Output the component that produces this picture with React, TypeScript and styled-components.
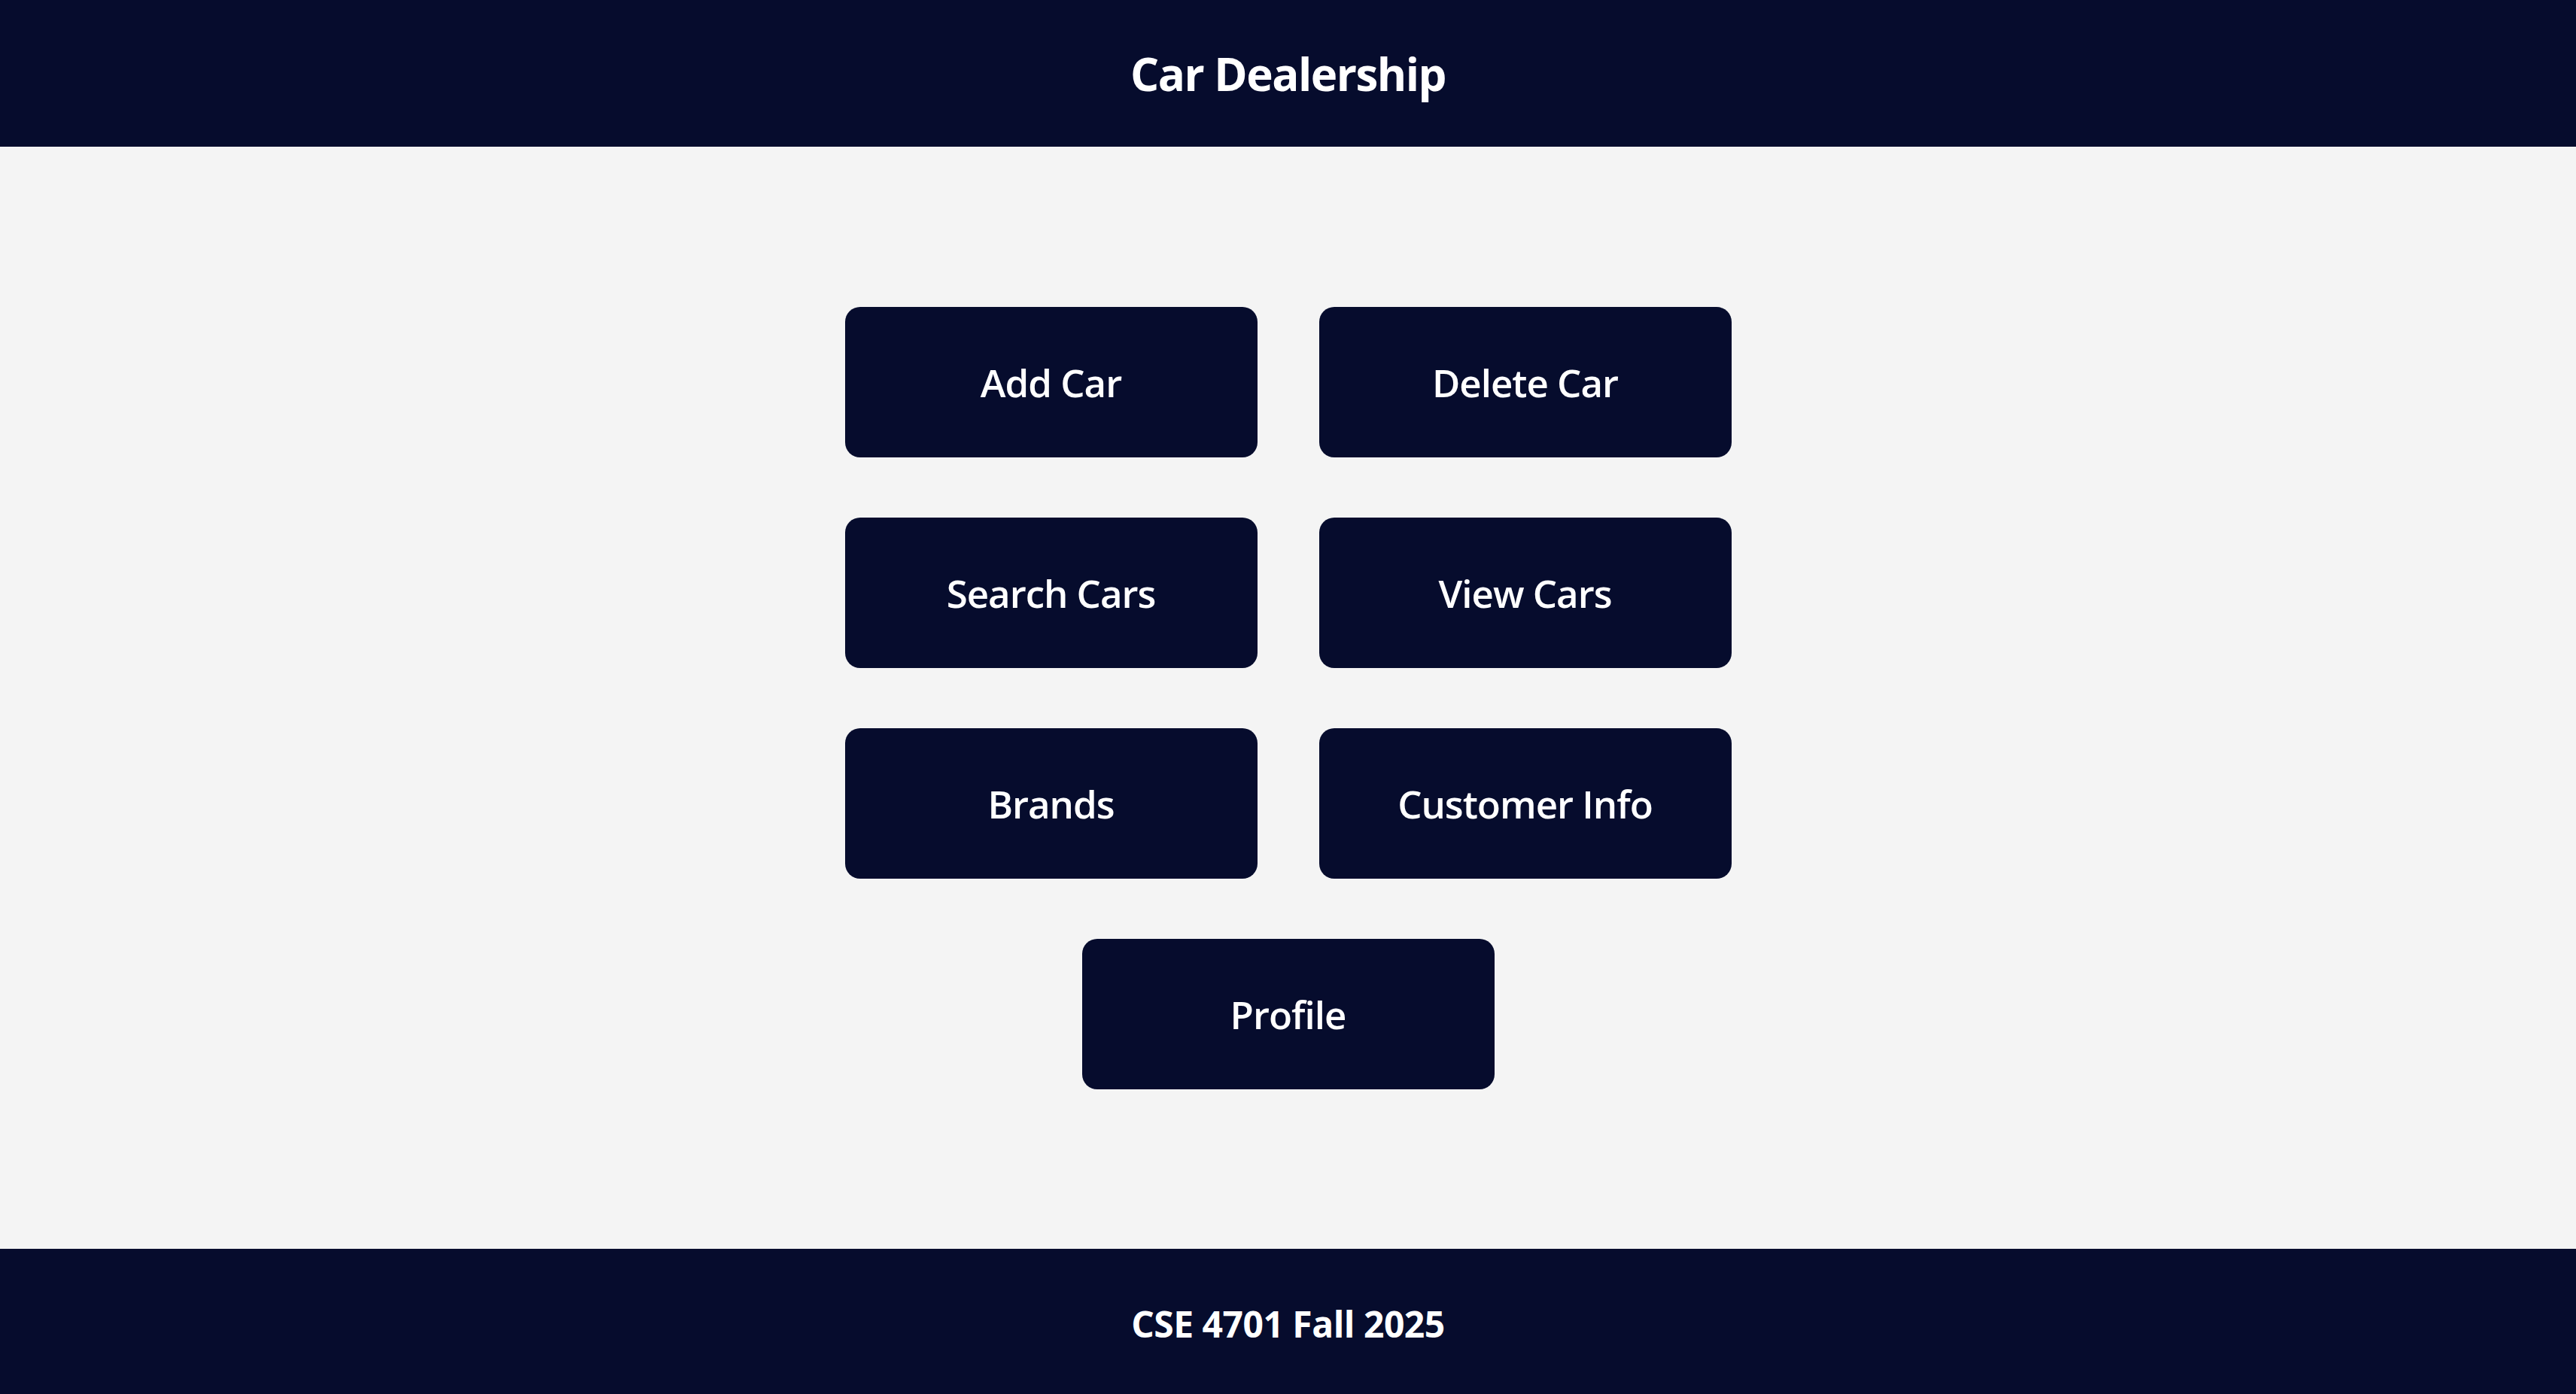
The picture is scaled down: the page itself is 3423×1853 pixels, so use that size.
import React from "react";
import styled, { createGlobalStyle } from "styled-components";

const GlobalStyle = createGlobalStyle`
  html, body {
    margin: 0;
    padding: 0;
    background: #f4f4f4;
    font-family: "Open Sans", "Noto Sans", sans-serif;
  }
`;

const Page = styled.div`
  display: flex;
  flex-direction: column;
  min-height: 100vh;
`;

const Header = styled.header`
  height: 195px;
  background: #060c2d;
  color: #ffffff;
  display: flex;
  align-items: center;
  justify-content: center;
`;

const Title = styled.h1`
  margin: 0;
  font-size: 60px;
  font-weight: 700;
  letter-spacing: -1.5px;
`;

const Main = styled.main`
  flex: 1;
  display: flex;
  align-items: center;
  justify-content: center;
`;

const Grid = styled.div`
  display: grid;
  grid-template-columns: 548px 548px;
  column-gap: 82px;
  row-gap: 80px;
`;

const ActionButton = styled.button<{ $wide?: boolean }>`
  width: 548px;
  height: 200px;
  border: none;
  border-radius: 20px;
  background: #060c2d;
  color: #ffffff;
  font-family: "Open Sans", "Noto Sans", sans-serif;
  font-size: 51px;
  font-weight: 600;
  letter-spacing: -1px;
  cursor: pointer;
  grid-column: ${(p) => (p.$wide ? "1 / span 2" : "auto")};
  justify-self: center;
`;

const Footer = styled.footer`
  height: 193px;
  background: #060c2d;
  color: #ffffff;
  display: flex;
  align-items: center;
  justify-content: center;
`;

const FooterText = styled.p`
  margin: 0;
  font-size: 48px;
  font-weight: 700;
  letter-spacing: -0.5px;
  padding-top: 6px;
`;

const actions = [
  "Add Car",
  "Delete Car",
  "Search Cars",
  "View Cars",
  "Brands",
  "Customer Info",
];

export default function App() {
  return (
    <Page>
      <GlobalStyle />
      <Header>
        <Title>Car Dealership</Title>
      </Header>
      <Main>
        <Grid>
          {actions.map((label) => (
            <ActionButton key={label}>{label}</ActionButton>
          ))}
          <ActionButton $wide>Profile</ActionButton>
        </Grid>
      </Main>
      <Footer>
        <FooterText>CSE 4701 Fall 2025</FooterText>
      </Footer>
    </Page>
  );
}
